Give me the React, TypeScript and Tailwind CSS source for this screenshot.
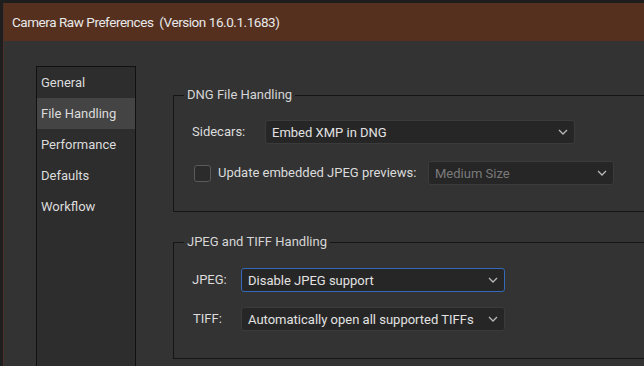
const bodyFont = { fontFamily: 'Roboto, "Noto Sans", sans-serif' };

function Chevron() {
  return (
    <svg width="10" height="6" viewBox="0 0 10 6" className="shrink-0">
      <polyline points="1,1 5,5 9,1" fill="none" stroke="#b8b8b8" strokeWidth="1.3" />
    </svg>
  );
}

function Select({ value, width, focused, disabled }: { value: string; width: string; focused?: boolean; disabled?: boolean }) {
  return (
    <div
      className={`${width} h-[24px] flex items-center justify-between pl-[6px] pr-[6px] rounded-[3px] bg-[#262626] border ${
        focused ? "border-[#3468b8]" : "border-[#3b3b3b]"
      }`}
    >
      <span className={`text-[13px] leading-none whitespace-nowrap ${disabled ? "text-[#7a7a7a]" : "text-[#e2e2e2]"}`}>{value}</span>
      <Chevron />
    </div>
  );
}

function Group({ title, children, className }: { title: string; children: React.ReactNode; className?: string }) {
  return (
    <fieldset className={`w-[500px] border border-[#151515] ${className ?? ""}`}>
      <legend className="ml-[10px] px-[3px] text-[13px] leading-[18px] text-[#d6d6d6]">{title}</legend>
      <div className="pl-[18px]">{children}</div>
    </fieldset>
  );
}

export default function App() {
  const items = ["General", "File Handling", "Performance", "Defaults", "Workflow"];
  return (
    <div className="w-[644px] h-[366px] overflow-hidden bg-[#1e1e1e] pt-[3px]" style={bodyFont}>
      <div className="ml-[3px] h-[363px] border-l border-[#4a3027] bg-[#333333] flex flex-col">
        <div className="h-[38px] bg-[#55301f] flex items-center pl-[8px] text-[13.5px] tracking-[-0.45px] text-[#e8e8e8] whitespace-pre">
          Camera Raw Preferences  (Version 16.0.1.1683)
        </div>
        <div className="flex flex-1 pl-[32px] pt-[25px]">
          <div className="w-[100px] border border-[#111111] border-b-0 bg-[#2d2d2d] shrink-0">
            {items.map((it) => (
              <div
                key={it}
                className={`h-[31px] flex items-center pl-[4px] text-[13px] text-[#dcdcdc] ${
                  it === "File Handling" ? "bg-[#444444]" : ""
                }`}
              >
                {it}
              </div>
            ))}
          </div>
          <div className="ml-[37px] flex flex-col shrink-0">
            <Group title="DNG File Handling" className="h-[126px] mt-[20px] pt-[16px]">
              <div className="flex items-center text-[13px] text-[#dcdcdc]">
                <span className="w-[73px]">Sidecars:</span>
                <Select value="Embed XMP in DNG" width="w-[310px]" />
              </div>
              <div className="flex items-center mt-[17px] text-[13px] text-[#dcdcdc]">
                <div className="ml-[2px] w-[17px] h-[17px] rounded-[3px] border border-[#5a5a5a] bg-[#2b2b2b]" />
                <span className="ml-[7px] w-[210px]">Update embedded JPEG previews:</span>
                <Select value="Medium Size" width="w-[186px]" disabled />
              </div>
            </Group>
            <Group title="JPEG and TIFF Handling" className="h-[126px] mt-[21px] pt-[17px]">
              <div className="flex items-center text-[13px] text-[#dcdcdc]">
                <span className="w-[49px]">JPEG:</span>
                <Select value="Disable JPEG support" width="w-[264px]" focused />
              </div>
              <div className="flex items-center mt-[15px] text-[13px] text-[#dcdcdc]">
                <span className="w-[49px] pl-[1px]">TIFF:</span>
                <Select value="Automatically open all supported TIFFs" width="w-[264px]" />
              </div>
            </Group>
          </div>
        </div>
      </div>
    </div>
  );
}
